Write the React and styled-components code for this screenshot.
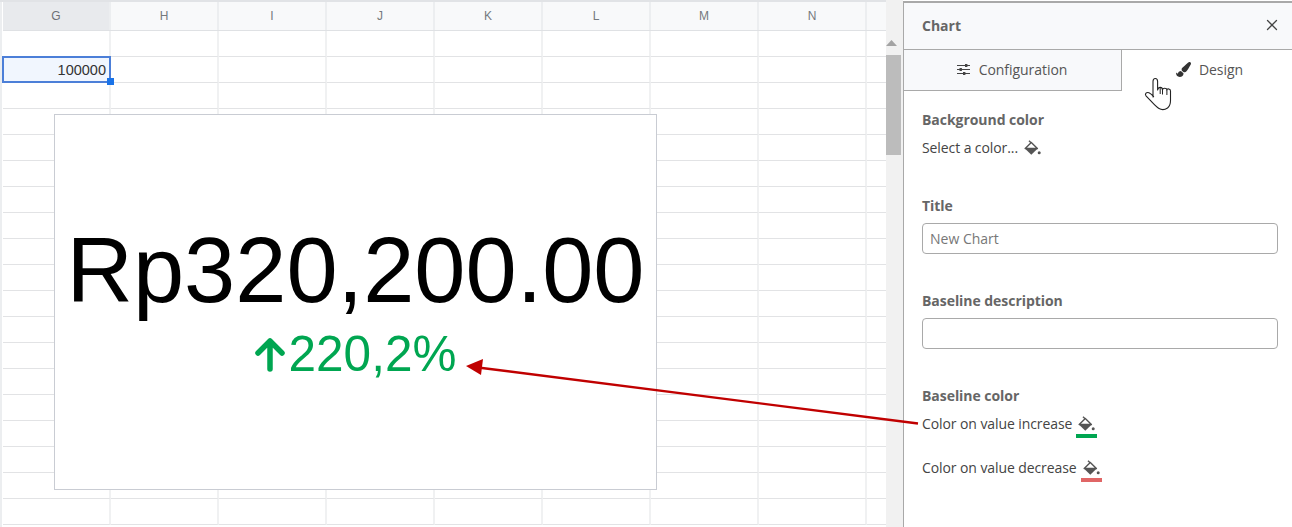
import React from "react";
import styled, { createGlobalStyle } from "styled-components";
import { FaPaintBrush } from "react-icons/fa";
import { X } from "lucide-react";

const Global = createGlobalStyle`
  html, body { margin: 0; padding: 0; background: #fff; overflow: hidden; }
  * { box-sizing: border-box; }
`;

const Page = styled.div`
  position: relative;
  display: flex;
  width: 1292px;
  height: 527px;
  overflow: hidden;
  background: #fff;
`;

const Sheet = styled.div`
  position: relative;
  flex: 0 0 886px;
  height: 527px;
  padding-left: 3px;
  overflow: hidden;
  background: #fff;
  border-top: 2px solid #e1e3e6;
  box-shadow: inset 2px 0 0 #eceef0;
`;

const HeaderRow = styled.div`
  display: flex;
  height: 29px;
  background: #f8f9fa;
  border-bottom: 1px solid #dfe1e4;
`;

const HeaderCell = styled.div`
  flex: 0 0 108px;
  display: flex;
  align-items: center;
  justify-content: center;
  font: 12px "Liberation Sans", Arial, sans-serif;
  color: ${(p) => (p.$active ? "#6d7075" : "#75797e")};
  background: ${(p) => (p.$active ? "#e8eaed" : "transparent")};
  border-right: 2px solid #eceef0;
`;

const Row = styled.div`
  display: flex;
  height: 26px;
`;

const Cell = styled.div`
  flex: 0 0 108px;
  border-right: 2px solid #f0f1f2;
  border-bottom: 1px solid #e2e3e5;
`;

const SelectedCell = styled.div`
  position: relative;
  flex: 0 0 109px;
  margin: -1px 0 0 -1px;
  height: 27px;
  padding-right: 3px;
  display: flex;
  align-items: center;
  justify-content: flex-end;
  background: #f1f6fe;
  border: 2px solid #4c7fd8;
  font: 14.5px "Liberation Sans", Arial, sans-serif;
  color: #333;
`;

const Handle = styled.span`
  position: absolute;
  right: -5px;
  bottom: -4px;
  width: 7px;
  height: 7px;
  background: #1a73e8;
`;

const ChartCard = styled.div`
  position: absolute;
  left: 54px;
  top: 112px;
  width: 603px;
  height: 376px;
  background: #fff;
  border: 1px solid #c9ccd3;
  display: flex;
  flex-direction: column;
  align-items: center;
  padding-top: 100px;
  font-family: "Liberation Sans", Arial, sans-serif;
`;

const BigValue = styled.div`
  font-size: 92px;
  line-height: 110px;
  color: #000;
  white-space: nowrap;
`;

const Baseline = styled.div`
  display: flex;
  align-items: center;
  gap: 2px;
  margin: 0 0 0 -2px;
  font-size: 49.5px;
  line-height: 58px;
  color: #00a651;
`;

const Track = styled.div`
  flex: 0 0 17px;
  height: 527px;
  background: #f1f1f1;
  display: flex;
  flex-direction: column;
  align-items: flex-start;
`;

const TrackTop = styled.div`
  height: 46px;
  width: 15px;
  display: flex;
  align-items: flex-end;
`;

const Thumb = styled.div`
  width: 15px;
  height: 100px;
  margin-top: 9px;
  background: #bcbcbc;
`;

const Panel = styled.aside`
  flex: 1;
  height: 527px;
  display: flex;
  flex-direction: column;
  border-left: 1px solid #a9a9a9;
  border-top: 2px solid #a9a9a9;
  margin-top: 1px;
  background: #fff;
  font-family: "Open Sans", sans-serif;
  font-size: 14px;
  color: #444;
`;

const PanelHeader = styled.header`
  height: 47px;
  flex: none;
  display: flex;
  align-items: center;
  justify-content: space-between;
  padding: 0 12px 2px 18px;
  background: #f8f9fb;
  border-bottom: 1px solid #a9a9a9;
`;

const PanelTitle = styled.h1`
  margin: 0;
  font-size: 14px;
  font-weight: 700;
  color: #666;
`;

const CloseButton = styled.span`
  display: flex;
  color: #444;
  margin-right: -1px;
`;

const Tabs = styled.div`
  display: flex;
  height: 41px;
  flex: none;
`;

const Tab = styled.div`
  display: flex;
  align-items: center;
  justify-content: center;
  gap: 8px;
  flex: ${(p) => (p.$active ? "1" : "0 0 218px")};
  letter-spacing: -0.05px;
  color: #555;
  background: ${(p) => (p.$active ? "#fff" : "#f8f9fb")};
  border-right: ${(p) => (p.$active ? "none" : "1px solid #a9a9a9")};
  border-bottom: ${(p) => (p.$active ? "none" : "1px solid #a9a9a9")};
  padding: ${(p) => (p.$active ? "0 0 2px 5px" : "0 2px 1px 0")};
`;

const Body = styled.div`
  padding: 19px 14px 0 18px;
  display: flex;
  flex-direction: column;
`;

const Label = styled.div`
  font-weight: 700;
  font-size: 14px;
  line-height: 20px;
  letter-spacing: -0.05px;
  color: #666;
  margin-top: ${(p) => p.$mt || 0}px;
`;

const Line = styled.div`
  display: flex;
  align-items: flex-start;
  gap: 4px;
  height: 20px;
  line-height: 20px;
  letter-spacing: -0.09px;
  color: #444;
  white-space: nowrap;
  margin-top: ${(p) => p.$mt || 0}px;
`;

const Swatch = styled.span`
  display: flex;
  flex-direction: column;
  align-items: center;
  width: 21px;
  height: 24px;
  padding-top: 2px;
  border-bottom: ${(p) => (p.$color ? `4px solid ${p.$color}` : "none")};
`;

const Input = styled.input`
  width: 356px;
  height: 31px;
  margin-top: 7px;
  padding: 0 7px;
  border: 1px solid #a9a9a9;
  border-radius: 4px;
  font: 14px "Open Sans", sans-serif;
  color: #666;
  outline: none;
  &::placeholder { color: #777; opacity: 1; }
`;

const Overlay = styled.svg`
  position: absolute;
  left: 0;
  top: 0;
  pointer-events: none;
`;

const Bucket = () => (
  <svg width="17" height="16" viewBox="0 0 17 16">
    <path d="M5 .8l2.600 2.400" stroke="#555" strokeWidth="1.400" fill="none" />
    <path d="M1.200 8.500L7.300 2.600l6.100 5.900z" fill="#fff" stroke="#555" strokeWidth="1.400" strokeLinejoin="round" />
    <path d="M.6 8.200h13.400L7.300 14.800z" fill="#555" />
    <circle cx="15.200" cy="12.800" r="1.500" fill="#555" />
  </svg>
);

const cols = ["G", "H", "I", "J", "K", "L", "M", "N", ""];
const rows = Array.from({ length: 19 }, (_, i) => i);

export default function App() {
  return (
    <Page>
      <Global />
      <Sheet>
        <HeaderRow>
          {cols.map((c, i) => (
            <HeaderCell key={i} $active={c === "G"}>{c}</HeaderCell>
          ))}
        </HeaderRow>
        {rows.map((r) => (
          <Row key={r}>
            {cols.map((c, i) =>
              r === 1 && i === 0 ? (
                <SelectedCell key={i}>
                  100000
                  <Handle />
                </SelectedCell>
              ) : (
                <Cell key={i} />
              )
            )}
          </Row>
        ))}
        <ChartCard>
          <BigValue>Rp320,200.00</BigValue>
          <Baseline>
            <svg width="34" height="36" viewBox="0 0 34 36">
              <path d="M17 33V5M5 17L17 5l12 12" fill="none" stroke="#00a651" strokeWidth="5.500" strokeLinecap="round" strokeLinejoin="round" />
            </svg>
            220,2%
          </Baseline>
        </ChartCard>
      </Sheet>
      <Track>
        <TrackTop>
          <svg width="11" height="6" viewBox="0 0 11 6"><path d="M5.500 0L11 6H0z" fill="#a3a3a3" /></svg>
        </TrackTop>
        <Thumb />
      </Track>
      <Panel>
        <PanelHeader>
          <PanelTitle>Chart</PanelTitle>
          <CloseButton><X size={18} strokeWidth={1.7} /></CloseButton>
        </PanelHeader>
        <Tabs>
          <Tab>
            <svg width="15" height="13" viewBox="0 0 15 13">
              <path d="M1 2.500h13M1 6.500h13M1 10.500h13" stroke="#444" strokeWidth="1.200" />
              <rect x="9" y="1" width="2.400" height="3" fill="#444" />
              <rect x="3.500" y="5" width="2.400" height="3" fill="#444" />
              <rect x="7" y="9" width="2.400" height="3" fill="#444" />
            </svg>
            Configuration
          </Tab>
          <Tab $active>
            <FaPaintBrush size={15} color="#333" />
            Design
          </Tab>
        </Tabs>
        <Body>
          <Label>Background color</Label>
          <Line $mt={8}>
            Select a color...
            <Swatch><Bucket /></Swatch>
          </Line>
          <Label $mt={38}>Title</Label>
          <Input defaultValue="" placeholder="New Chart" />
          <Label $mt={37}>Baseline description</Label>
          <Input />
          <Label $mt={37}>Baseline color</Label>
          <Line $mt={8}>
            Color on value increase
            <Swatch $color="#00a651"><Bucket /></Swatch>
          </Line>
          <Line $mt={24}>
            Color on value decrease
            <Swatch $color="#e06666"><Bucket /></Swatch>
          </Line>
        </Body>
      </Panel>
      <Overlay width="1292" height="527" viewBox="0 0 1292 527">
        <path d="M918 423.500L478 367.500" stroke="#c00000" strokeWidth="2.400" fill="none" />
        <path d="M466 366l17-7-2 16z" fill="#c00000" />
        <path
          d="M1153 97V81.500c0-4 4.600-4 4.600 0V90c0 .3.3-2.600 2.600-2.600s2.300 2.600 2.300 2.600c.1-2.400 4.300-2.400 4.400 0 .3-1.800 3.600-1.400 3.600 1v9.500c0 4-1.800 6.500-3 7.500-2.500 1.800-6 2-8.500.6-3.500-2-7-6.600-13-12.800-1.500-2 .5-4 3-3 1.600.7 3 2 4.600 3.700z"
          fill="#fff"
          stroke="#222"
          strokeWidth="1.100"
          strokeLinejoin="round"
        />
        <path d="M1160.200 88v6M1162.500 90v4.500M1166.900 90v5" stroke="#222" strokeWidth="1" fill="none" />
      </Overlay>
    </Page>
  );
}
